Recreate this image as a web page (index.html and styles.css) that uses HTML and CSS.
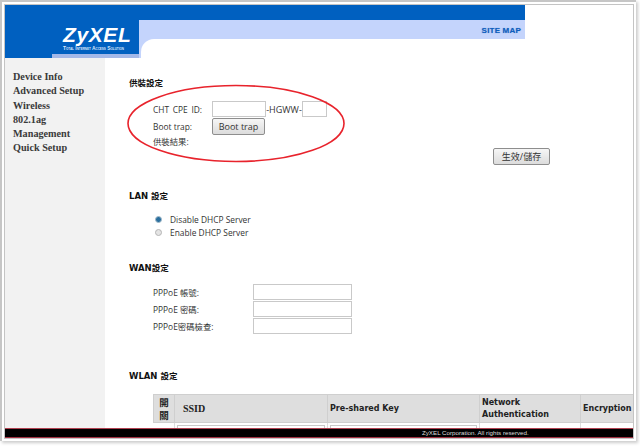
FILE: index.html
```html
<!DOCTYPE html>
<html lang="zh-Hant">
<head>
<meta charset="utf-8">
<title>ZyXEL</title>
<link rel="stylesheet" href="styles.css">
</head>
<body>
<div class="shell">
<div class="frame">
  <header class="header">
    <div class="brand">
      <div class="logo">ZyXEL</div>
      <div class="tagline">Total Internet Access Solution</div>
    </div>
    <div class="band">
      <span class="sitemap">SITE MAP</span>
      <div class="band-inner"></div>
    </div>
  </header>
  <div class="body">
    <nav class="side">
      <a>Device Info</a>
      <a>Advanced Setup</a>
      <a>Wireless</a>
      <a>802.1ag</a>
      <a>Management</a>
      <a>Quick Setup</a>
    </nav>
    <main class="main">
      <h2 class="h-first">供裝設定</h2>
      <div class="prov">
        <div class="prov-row">
          <label class="prov-label wide">CHT CPE ID:</label>
          <input class="in-a" type="text"><span class="dash">-HGWW-</span><input class="in-b" type="text">
        </div>
        <div class="prov-row">
          <label class="prov-label">Boot trap:</label>
          <button class="btn btn-boot">Boot trap</button>
        </div>
        <div class="prov-row prov-result">
          <label class="prov-label">供裝結果:</label>
        </div>
      </div>
      <div class="save-row"><button class="btn btn-save">生效/儲存</button></div>
      <h2 class="h-lan">LAN 設定</h2>
      <div class="radios">
        <label class="radio"><span class="dot on"></span>Disable DHCP Server</label>
        <label class="radio"><span class="dot"></span>Enable DHCP Server</label>
      </div>
      <h2 class="h-wan">WAN設定</h2>
      <div class="wan">
        <label>PPPoE 帳號:</label><input type="text">
        <label>PPPoE 密碼:</label><input type="text">
        <label>PPPoE密碼檢查:</label><input type="text">
      </div>
      <h2 class="h-wlan">WLAN 設定</h2>
      <table class="wlan">
        <tr>
          <th class="c-sw">開<br>關</th>
          <th class="c-ssid">SSID</th>
          <th class="c-key">Pre-shared Key</th>
          <th class="c-auth">Network Authentication</th>
          <th class="c-enc">Encryption</th>
        </tr>
        <tr>
          <td></td>
          <td><input class="cell-in" type="text"></td>
          <td><input class="cell-in" type="text"></td>
          <td></td>
          <td></td>
        </tr>
      </table>
    </main>
    <svg class="ring" width="224" height="84" viewBox="0 0 224 84" aria-hidden="true">
      <ellipse cx="112" cy="41.5" rx="108" ry="38" fill="none" stroke="#e8232c" stroke-width="1.6"/>
    </svg>
  </div>
  <footer class="footer">ZyXEL Corporation. All rights reserved.</footer>
</div>
</div>
</body>
</html>
```
FILE: styles.css
```css
* { box-sizing: border-box; }
html, body { margin: 0; padding: 0; background: #fff; }
body {
  width: 640px;
  height: 446px;
  overflow: hidden;
  font-family: "Open Sans", "Noto Sans CJK TC", sans-serif;
  color: #333;
}
.shell {
  width: 636px;
  height: 441px;
  border-top: 2px solid #c6c6c6;
  border-left: 2px solid #c6c6c6;
  box-shadow: 2px 2px 3px #ccc;
  padding: 2px 0 0 2px;
}
.frame {
  position: relative;
  width: 630px;
  height: 435px;
  border: 1px solid #c4c4c4;
  display: flex;
  flex-direction: column;
  overflow: hidden;
  background: #fff;
}
.header {
  position: relative;
  flex: none;
  width: 520px;
  height: 53px;
  background: #0060c0;
}
.brand {
  position: absolute;
  left: 47px;
  top: 0;
  width: 87px;
  height: 53px;
  border-bottom: 4px solid #a3b8e8;
  padding-left: 11px;
}
.logo {
  margin-top: 19px;
  font: italic bold 21px/22px "Liberation Sans", sans-serif;
  letter-spacing: 0.6px;
  color: #fff;
  white-space: nowrap;
}
.tagline {
  font: bold 4.9px/6px "Liberation Sans", sans-serif;
  font-variant: small-caps;
  color: #dbe6fa;
  white-space: nowrap;
}
.band {
  position: absolute;
  left: 134px;
  right: 0;
  top: 15px;
  height: 38px;
  background: #c4d4fc;
  text-align: right;
  padding-right: 4px;
}
.band-inner {
  position: absolute;
  left: 2px;
  right: 0;
  top: 19px;
  bottom: 0;
  background: #fff;
  border-top-left-radius: 13px;
}
.sitemap {
  display: block;
  font: bold 8px/22px "Liberation Sans", sans-serif;
  letter-spacing: 0.2px;
  color: #0d5fc0;
  text-shadow: 0 0 1px #6f8fc8;
}
.body {
  position: relative;
  flex: 1;
  min-height: 0;
  display: flex;
  overflow: hidden;
}
.side {
  flex: none;
  width: 100px;
  background: #f2f2f2;
  padding-top: 12px;
  display: flex;
  flex-direction: column;
}
.side a {
  height: 14.3px;
  padding-left: 8px;
  font: bold 10.2px/14px "Liberation Serif", serif;
  color: #3a3a3a;
  white-space: nowrap;
}
.main {
  flex: 1;
  min-width: 0;
  padding: 19px 0 0 24px;
  font-size: 8.4px;
}
h2 {
  margin: 0;
  font: bold 8.5px/12px "DejaVu Sans", "Noto Sans CJK TC", sans-serif;
  color: #111;
}
.prov { margin: 12px 0 0 24px; }
.prov-row { display: flex; align-items: center; height: 16px; }
.prov-row + .prov-row { height: 18px; }
.prov-result { height: 12px !important; }
.prov-label { width: 59px; flex: none; }
.wide { word-spacing: 1.5px; }
input {
  height: 16px;
  padding: 0;
  background: #fff;
  border: 1px solid #c9c9c9;
  outline: none;
}
.in-a { width: 54px; }
.dash { width: 36px; text-align: center; white-space: nowrap; font-size: 9px; }
.in-b { width: 25px; }
.btn {
  font: 9px/1 "Open Sans", "Noto Sans CJK TC", sans-serif;
  color: #333;
  background: linear-gradient(#f6f6f6, #dcdcdc);
  border: 1px solid #8e8e8e;
  border-radius: 2px;
  padding: 0;
  height: 17px;
}
.btn-boot { width: 53px; }
.save-row { padding-left: 364px; margin-top: 1px; }
.btn-save { width: 57px; }
.h-lan { margin-top: 25px; }
.radios { margin: 11px 0 0 26px; }
.radio { display: flex; align-items: center; height: 13px; gap: 8px; }
.dot {
  width: 7px;
  height: 7px;
  border-radius: 50%;
  border: 1px solid #b5b5b5;
  background: #e4e4e4;
}
.dot.on { background: #2a6f9e; border-color: #a5bccb; }
.h-wan { margin-top: 23px; }
.wan {
  margin: 10px 0 0 24px;
  display: grid;
  grid-template-columns: 100px 99px;
  row-gap: 1px;
  align-items: center;
}
.wan input { height: 16px; width: 99px; }
.h-wlan { margin-top: 36px; }
.wlan {
  margin: 12px 0 0 24px;
  border-collapse: collapse;
  table-layout: fixed;
  width: 480px;
}
.wlan th {
  height: 28px;
  background: #dedede;
  border: 1px solid #cfcfcf;
  text-align: left;
  padding: 0 2px;
  font: bold 8px/12px "DejaVu Sans", "Noto Sans CJK TC", sans-serif;
  color: #222;
}
.wlan td { height: 12px; padding: 2px; border-right: 1px solid #ddd; }
.cell-in { width: 100%; height: 14px; display: block; }
.wlan .c-sw { width: 21px; text-align: center; font: bold 9.5px/13px "Noto Sans CJK TC", sans-serif; }
.wlan .c-ssid { width: 153px; padding-left: 8px; font: bold 10px/12px "Liberation Serif", serif; }
.c-key { width: 152px; }
.c-auth { width: 101px; }
.c-enc { width: 53px; }
.ring { position: absolute; left: 119px; top: 24px; pointer-events: none; }
.footer {
  flex: none;
  position: relative;
  height: 10px;
  background: #000;
  border-top: 1px solid #b04050;
  border-bottom: 1px solid #a03040;
  color: #ddd;
  font: 6.2px/8px "Liberation Sans", sans-serif;
  padding-left: 417px;
}
```
